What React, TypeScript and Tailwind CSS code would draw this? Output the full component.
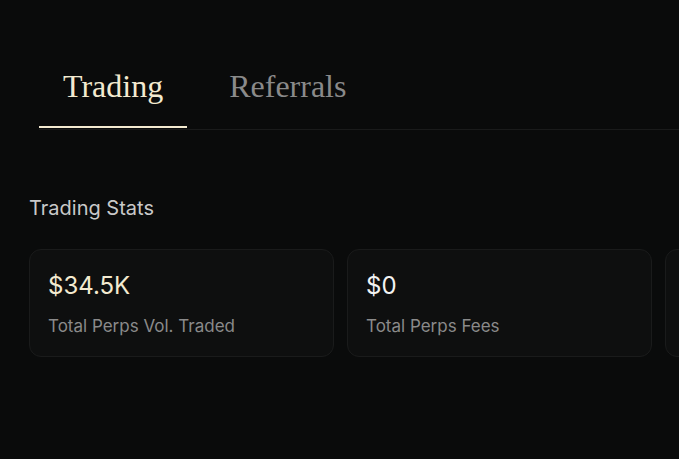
import { useState } from 'react'

const stats = [
  { value: '$34.5K', label: 'Total Perps Vol. Traded', accent: true },
  { value: '$0', label: 'Total Perps Fees', accent: false },
  { value: '', label: '', accent: false },
]

export default function App() {
  const [tab, setTab] = useState('Trading')

  return (
    <div className="min-h-screen w-full overflow-hidden bg-[#0a0b0b] font-['Inter',sans-serif]">
      <div className="ml-[39px] flex gap-[18px] border-b border-[#1a1b1b] pt-[66px] pb-[1px]">
        {['Trading', 'Referrals'].map((t) => (
          <button
            key={t}
            onClick={() => setTab(t)}
            className={`px-[24px] pb-[20px] font-['Liberation_Serif',serif] text-[32px] leading-[40px] border-b-2 ${
              tab === t ? 'border-[#f3ead0] text-[#f3ead0]' : 'border-transparent text-[#8a8a8a]'
            }`}
          >
            {t}
          </button>
        ))}
      </div>

      <div className="pl-[29px] pt-[64px]">
        <h2 className="text-[20px] leading-[28px] text-[#c9c9c9]">Trading Stats</h2>
        <div className="mt-[27px] flex gap-[13px]">
          {stats.map((s, i) => (
            <div
              key={i}
              className="h-[108px] w-[305px] shrink-0 rounded-xl border border-[#1a1b1b] bg-[#0e0f0f] px-[18px] pt-[21px]"
            >
              <div className={`text-[24px] leading-[30px] ${s.accent ? 'text-[#f3ead0]' : 'text-[#f2f2f2]'}`}>
                {s.value}
              </div>
              <div className="mt-[13px] text-[17px] leading-[24px] text-[#8a8a8a]">{s.label}</div>
            </div>
          ))}
        </div>
      </div>
    </div>
  )
}
